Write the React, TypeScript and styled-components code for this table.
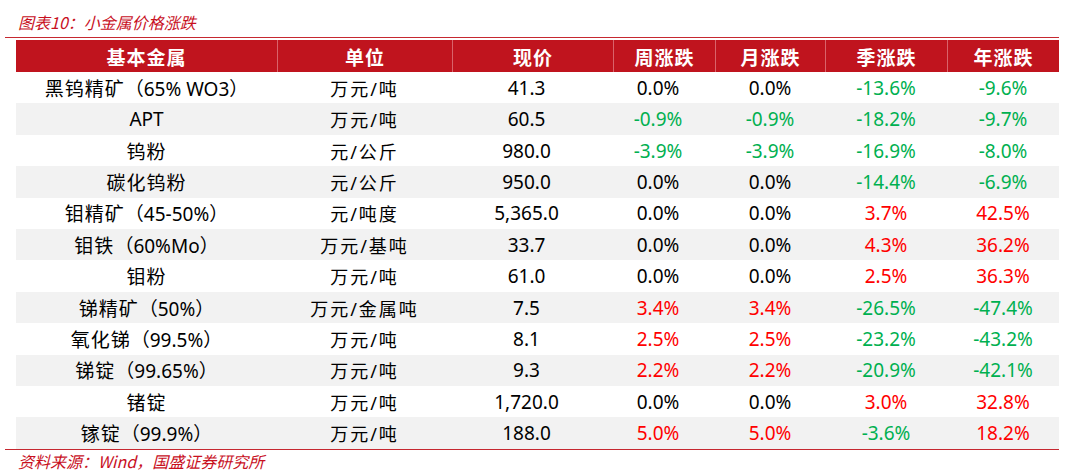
import React from "react";
import styled, { createGlobalStyle } from "styled-components";

const Global = createGlobalStyle`
  html, body { margin: 0; padding: 0; background: #fff; }
  body { font-family: "Noto Sans", "Noto Sans CJK SC", sans-serif; }
`;

const COLS = "261px 175px 161px 102px 110px 122px 112px";
const RED = "#C0141E";
const LINE = "#C62830";

const Page = styled.div`
  width: 1065px;
  height: 474px;
  display: flex;
  flex-direction: column;
  box-sizing: border-box;
  padding-top: 10px;
`;

const Title = styled.div`
  height: 24px;
  line-height: 24px;
  padding-left: 18px;
  font-family: "Noto Sans CJK SC", sans-serif;
  font-style: italic;
  font-size: 16px;
  color: #C8101E;
`;

const Rule = styled.div<{ $top: number }>`
  margin-top: ${(p) => p.$top}px;
  margin-left: 5px;
  width: 1054px;
  height: 1px;
  background: ${LINE};
`;

const Table = styled.div`
  margin-left: 16px;
  margin-top: 2px;
  width: 1043px;
  display: flex;
  flex-direction: column;
`;

const HeadRow = styled.div`
  display: grid;
  grid-template-columns: ${COLS};
  height: 32px;
  background: ${RED};
`;

const HeadCell = styled.div<{ $first?: boolean }>`
  display: flex;
  align-items: center;
  justify-content: center;
  color: #fff;
  font-family: "Noto Sans CJK SC", sans-serif;
  font-weight: 700;
  font-size: 19px;
  letter-spacing: 1px;
  border-left: ${(p) => (p.$first ? "none" : "1px solid #D9636A")};
`;

const Row = styled.div<{ $alt: boolean }>`
  display: grid;
  grid-template-columns: ${COLS};
  height: 31.42px;
  background: ${(p) => (p.$alt ? "#F2F2F2" : "#FFFFFF")};
`;

const Cell = styled.div<{ $tone?: "pos" | "neg" | "zero"; $cjk?: boolean; $shift?: number }>`
  display: flex;
  align-items: center;
  justify-content: center;
  white-space: nowrap;
  font-family: "Noto Sans", "Noto Sans CJK SC", sans-serif;
  font-size: ${(p) => (p.$cjk ? "18px" : "19px")};
  letter-spacing: ${(p) => (p.$cjk ? "2px" : "0")};
  padding-right: ${(p) => p.$shift ?? 0}px;
  color: ${(p) =>
    p.$tone === "pos" ? "#FF0000" : p.$tone === "neg" ? "#00B050" : "#000000"};
`;

const Name = styled.span`
  font-size: 19px;
  & b {
    font-weight: 400;
    font-family: "Noto Sans CJK SC", sans-serif;
    font-size: 19px;
    letter-spacing: 1px;
  }
`;

const Footer = styled.div`
  height: 20px;
  line-height: 20px;
  margin-top: 1px;
  padding-left: 18px;
  font-family: "Noto Sans CJK SC", sans-serif;
  font-style: italic;
  font-size: 16px;
  color: #C8101E;
`;

const headers = ["基本金属", "单位", "现价", "周涨跌", "月涨跌", "季涨跌", "年涨跌"];

type R = [string, string, string, string, string, string, string, string];
const rows: R[] = [
  ["黑钨精矿", "（65% WO3）", "万元/吨", "41.3", "0.0%", "0.0%", "-13.6%", "-9.6%"],
  ["", "APT", "万元/吨", "60.5", "-0.9%", "-0.9%", "-18.2%", "-9.7%"],
  ["钨粉", "", "元/公斤", "980.0", "-3.9%", "-3.9%", "-16.9%", "-8.0%"],
  ["碳化钨粉", "", "元/公斤", "950.0", "0.0%", "0.0%", "-14.4%", "-6.9%"],
  ["钼精矿", "（45-50%）", "元/吨度", "5,365.0", "0.0%", "0.0%", "3.7%", "42.5%"],
  ["钼铁", "（60%Mo）", "万元/基吨", "33.7", "0.0%", "0.0%", "4.3%", "36.2%"],
  ["钼粉", "", "万元/吨", "61.0", "0.0%", "0.0%", "2.5%", "36.3%"],
  ["锑精矿", "（50%）", "万元/金属吨", "7.5", "3.4%", "3.4%", "-26.5%", "-47.4%"],
  ["氧化锑", "（99.5%）", "万元/吨", "8.1", "2.5%", "2.5%", "-23.2%", "-43.2%"],
  ["锑锭", "（99.65%）", "万元/吨", "9.3", "2.2%", "2.2%", "-20.9%", "-42.1%"],
  ["锗锭", "", "万元/吨", "1,720.0", "0.0%", "0.0%", "3.0%", "32.8%"],
  ["镓锭", "（99.9%）", "万元/吨", "188.0", "5.0%", "5.0%", "-3.6%", "18.2%"],
];

const tone = (v: string): "pos" | "neg" | "zero" =>
  v.startsWith("-") ? "neg" : parseFloat(v) === 0 ? "zero" : "pos";

export default function App() {
  return (
    <Page>
      <Global />
      <Title>图表10：小金属价格涨跌</Title>
      <Rule $top={3} />
      <Table>
        <HeadRow>
          {headers.map((h, i) => (
            <HeadCell key={h} $first={i === 0}>
              {h}
            </HeadCell>
          ))}
        </HeadRow>
        {rows.map((r, i) => (
          <Row key={i} $alt={i % 2 === 1}>
            <Cell>
              <Name>
                {r[0] && <b>{r[0]}</b>}
                {r[1]}
              </Name>
            </Cell>
            <Cell $cjk>{r[2]}</Cell>
            <Cell $shift={12}>{r[3]}</Cell>
            {r.slice(4).map((v, j) => (
              <Cell key={j} $tone={tone(v)} $shift={j === 0 ? 12 : 0}>
                {v}
              </Cell>
            ))}
          </Row>
        ))}
      </Table>
      <Rule $top={0} />
      <Footer>资料来源：Wind，国盛证券研究所</Footer>
    </Page>
  );
}
